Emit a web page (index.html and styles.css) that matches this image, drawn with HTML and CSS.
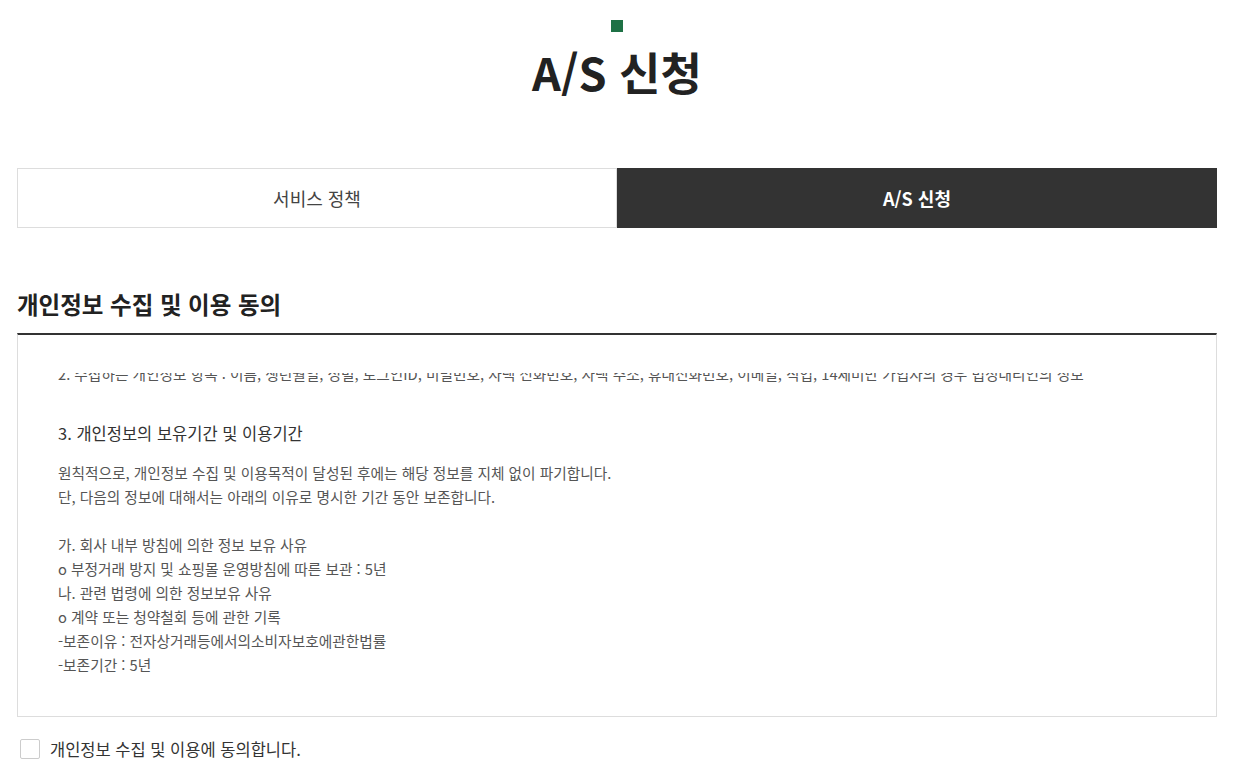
FILE: index.html
```html
<!DOCTYPE html>
<html lang="ko">

<head>
    <meta charset="UTF-8">
    <meta name="viewport" content="width=device-width, initial-scale=1.0">
    <title>A/S 신청</title>
    <link rel="stylesheet" href="styles.css">
</head>

<body>
    <div class="wrap">
        <div class="page-title">
            <span class="title-mark"></span>
            <h2>A/S 신청</h2>
        </div>

        <ul class="tabs">
            <li><a href="#">서비스 정책</a></li>
            <li class="active"><a href="#">A/S 신청</a></li>
        </ul>

        <h3 class="section-title">개인정보 수집 및 이용 동의</h3>
        <div class="agree-box">
            <div class="agree-scroll">
                <h4>1. 개인정보 수집목적 및 이용목적</h4>
                <p>회원제 서비스 이용에 따른 본인확인, 개인식별, 불량회원의 부정 이용 방지와 비인가 사용 방지, 가입의사 확인, A/S 접수 및 처리</p>
                <p class="item-2">2. 수집하는 개인정보 항목 : 이름, 생년월일, 성별, 로그인ID, 비밀번호, 자택 전화번호, 자택 주소, 휴대전화번호, 이메일, 직업, 14세미만 가입자의 경우 법정대리인의 정보</p>

                <h4>3. 개인정보의 보유기간 및 이용기간</h4>
                <p>원칙적으로, 개인정보 수집 및 이용목적이 달성된 후에는 해당 정보를 지체 없이 파기합니다.<br>
                    단, 다음의 정보에 대해서는 아래의 이유로 명시한 기간 동안 보존합니다.</p>
                <p class="gap">가. 회사 내부 방침에 의한 정보 보유 사유<br>
                    o 부정거래 방지 및 쇼핑몰 운영방침에 따른 보관 : 5년<br>
                    나. 관련 법령에 의한 정보보유 사유<br>
                    o 계약 또는 청약철회 등에 관한 기록<br>
                    -보존이유 : 전자상거래등에서의소비자보호에관한법률<br>
                    -보존기간 : 5년</p>
            </div>
        </div>

        <label class="agree-check">
            <input type="checkbox">
            <span class="check-box"></span>
            개인정보 수집 및 이용에 동의합니다.
        </label>
    </div>

    <script>
        // 스크롤 위치 맞추기
        var scrollBox = document.querySelector('.agree-scroll');
        var item = document.querySelector('.item-2');
        scrollBox.scrollTop = item.offsetTop + 11;
    </script>
</body>

</html>
```

FILE: styles.css
```css
/* 기본 */
body {
    font-family: 'Noto Sans CJK KR', 'Noto Sans', sans-serif;
    margin: 0;
    padding: 0;
    color: #333;
    background-color: #fff;
}

:root {
    --point-color: #1e7145;
    --dark-color: #333;
    --line-color: #ddd;
}

.wrap {
    width: 1200px;
    margin: 0 0 0 17px;
}

/* 타이틀 */
.page-title {
    display: flex;
    flex-direction: column;
    align-items: center;
    padding-top: 20px;
}

.title-mark {
    width: 12px;
    height: 12px;
    background-color: var(--point-color);
}

.page-title h2 {
    margin: 13px 0 0;
    font-size: 45px;
    line-height: 54px;
    font-weight: 700;
    color: #222;
}

/* 탭 */
.tabs {
    display: flex;
    list-style: none;
    margin: 69px 0 0;
    padding: 0;
}

.tabs li {
    flex: 1;
}

.tabs a {
    display: flex;
    align-items: center;
    justify-content: center;
    height: 58px;
    border: 1px solid var(--line-color);
    font-size: 18px;
    font-weight: 400;
    color: #444;
    text-decoration: none;
}

.tabs li.active a {
    background-color: var(--dark-color);
    border-color: var(--dark-color);
    color: #fff;
    font-weight: 700;
}

/* 약관 */
.section-title {
    margin: 61px 0 14px;
    font-size: 23.5px;
    line-height: 30px;
    font-weight: 700;
    color: #222;
}

.agree-box {
    border: 1px solid var(--line-color);
    border-top: 2px solid var(--dark-color);
    padding: 38px 40px 34px;
}

.agree-scroll {
    position: relative;
    height: 309px;
    overflow: hidden;
}

.agree-scroll h4 {
    margin: 35px 0 16px;
    font-size: 16.5px;
    line-height: 24px;
    font-weight: 400;
    color: #333;
}

.agree-scroll h4:first-child {
    margin-top: 0;
}

.agree-scroll p {
    margin: 0;
    font-size: 14.7px;
    line-height: 24px;
    color: #555;
    white-space: nowrap;
}

.agree-scroll p.gap {
    margin-top: 24px;
    padding-bottom: 60px;
}

/* 체크박스 */
.agree-check {
    display: flex;
    align-items: center;
    gap: 10px;
    margin: 20px 0 0 3px;
    font-size: 16.5px;
    color: #333;
    cursor: pointer;
}

.agree-check input {
    display: none;
}

.check-box {
    width: 18px;
    height: 18px;
    border: 1px solid #ccc;
    border-radius: 2px;
    background-color: #fff;
}
```
